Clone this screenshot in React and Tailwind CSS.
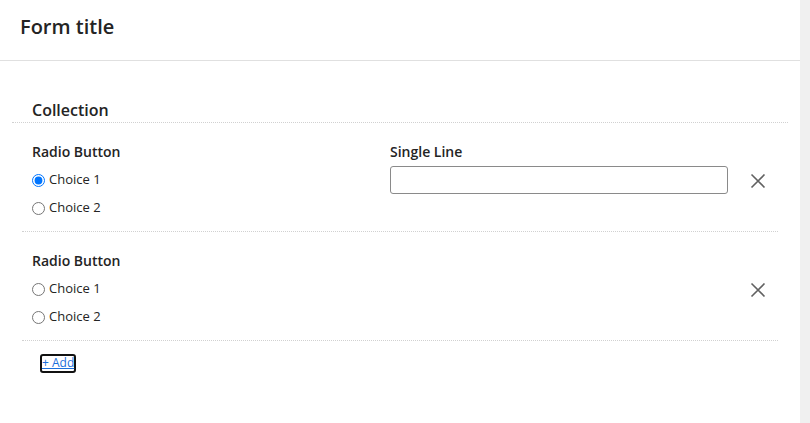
import { useState } from "react";

function CloseIcon() {
  return (
    <svg width="16" height="16" viewBox="0 0 16 16" className="text-[#616161]">
      <path d="M1.5 1.5 L14.5 14.5 M14.5 1.5 L1.5 14.5" stroke="currentColor" strokeWidth="1.6" fill="none" />
    </svg>
  );
}

function Choices({ name, value, onChange }) {
  return (
    <div className="flex flex-col">
      {["Choice 1", "Choice 2"].map((c) => (
        <label key={c} className="flex items-center h-[28px] gap-[4px] text-[13px] text-[#242424]">
          <input
            type="radio"
            name={name}
            checked={value === c}
            onChange={() => onChange(c)}
            className="m-0 w-[13px] h-[13px]"
          />
          <span>{c}</span>
        </label>
      ))}
    </div>
  );
}

function Row({ children }) {
  return (
    <div className="flex items-start pt-[19px] pb-[9px] pl-[10px] pr-[12px] border-b border-dotted border-[#d1d1d1]">
      {children}
    </div>
  );
}

export default function App() {
  const [a, setA] = useState("Choice 1");
  const [b, setB] = useState(null);

  return (
    <div className="flex w-[810px] h-[423px] bg-white" style={{ fontFamily: "'Open Sans', 'Noto Sans', sans-serif" }}>
      <div className="flex-1 flex flex-col">
        <div className="h-[61px] border-b border-[#e0e0e0] px-5 flex items-center pb-[6px]">
          <h1 className="text-[20px] font-semibold text-[#242424]">Form title</h1>
        </div>

        <div className="mx-3 mt-[39px]">
          <div className="pl-5 h-[23px] border-b border-dotted border-[#d1d1d1] text-[16px] font-semibold text-[#242424] leading-[20px]">
            Collection
          </div>

          <div className="mx-[10px]">
            <Row>
              <div className="w-[358px]">
                <div className="h-[24px] text-[14px] font-semibold text-[#242424] leading-[20px]">Radio Button</div>
                <Choices name="r1" value={a} onChange={setA} />
              </div>
              <div className="w-[338px]">
                <div className="h-[24px] text-[14px] font-semibold text-[#242424] leading-[20px]">Single Line</div>
                <input
                  type="text"
                  className="block w-full h-[28px] rounded-[3px] border border-[#8a8a8a] px-2 text-[13px] outline-none"
                />
              </div>
              <button className="ml-[22px] mt-[31px] w-4 h-4 flex items-center justify-center">
                <CloseIcon />
              </button>
            </Row>

            <Row>
              <div className="w-[696px]">
                <div className="h-[24px] text-[14px] font-semibold text-[#242424] leading-[20px]">Radio Button</div>
                <Choices name="r2" value={b} onChange={setB} />
              </div>
              <button className="ml-[22px] mt-[31px] w-4 h-4 flex items-center justify-center">
                <CloseIcon />
              </button>
            </Row>

            <div className="flex pl-[18px] pt-[13px]">
              <a
                href="#"
                className="block h-[19px] leading-[14px] text-[12px] text-[#1a6fdc] underline rounded-[3px] border-2 border-[#111]"
              >
                + Add
              </a>
            </div>
          </div>
        </div>
      </div>
      <div className="w-[10px] bg-[#f0f0f0]" />
    </div>
  );
}
